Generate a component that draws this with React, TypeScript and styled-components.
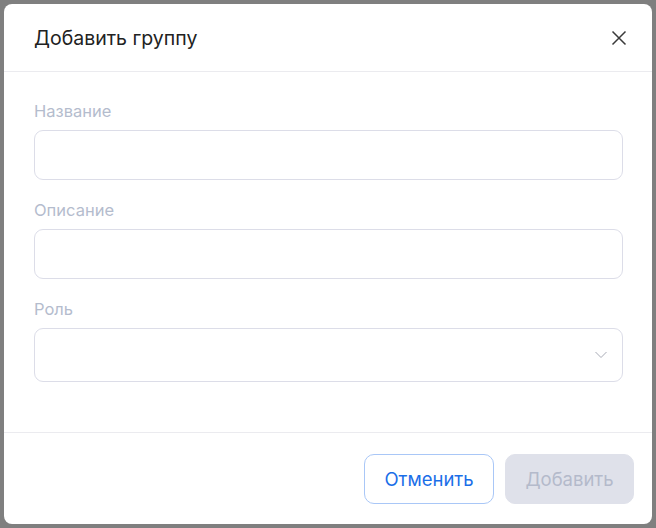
import React, { useState } from 'react';
import styled, { createGlobalStyle } from 'styled-components';

const GlobalStyle = createGlobalStyle`
  html, body {
    margin: 0;
    padding: 0;
    height: 100%;
  }
  body {
    background: #7f7f7f;
    font-family: Inter, "Noto Sans", "Liberation Sans", sans-serif;
  }
  #root {
    height: 100%;
  }
`;

const Overlay = styled.div`
  box-sizing: border-box;
  width: 656px;
  height: 528px;
  padding: 4px;
  display: flex;
  background: #7f7f7f;
`;

const Modal = styled.div`
  box-sizing: border-box;
  width: 648px;
  height: 520px;
  background: #fff;
  border-radius: 8px;
  display: flex;
  flex-direction: column;
  overflow: hidden;
`;

const Header = styled.div`
  height: 67px;
  padding: 0 21px 0 30px;
  display: flex;
  align-items: center;
  justify-content: space-between;
  border-bottom: 1px solid #ebebef;
`;

const Title = styled.h2`
  margin: 0;
  font-size: 19.5px;
  font-weight: 400;
  color: #222;
`;

const CloseButton = styled.button`
  width: 24px;
  height: 24px;
  padding: 0;
  border: none;
  background: none;
  display: flex;
  align-items: center;
  justify-content: center;
  cursor: pointer;
  color: #3a3a3a;
`;

const Body = styled.div`
  flex: 1;
  padding: 27px 29px 0 30px;
  display: flex;
  flex-direction: column;
  border-bottom: 1px solid #ebebef;
`;

const Field = styled.div`
  display: flex;
  flex-direction: column;
  gap: 7px;
  margin-bottom: 18px;
`;

const Label = styled.label`
  font-size: 16.5px;
  line-height: 24px;
  color: #b4bccd;
`;

const Input = styled.input`
  box-sizing: border-box;
  width: 100%;
  height: 50px;
  border: 1px solid #dcdde8;
  border-radius: 9px;
  padding: 0 16px;
  font-size: 16px;
  font-family: inherit;
  outline: none;
  background: #fff;
`;

const SelectBox = styled.div`
  box-sizing: border-box;
  width: 100%;
  height: 54px;
  border: 1px solid #dcdde8;
  border-radius: 9px;
  padding: 0 14px 1px 16px;
  display: flex;
  align-items: center;
  justify-content: flex-end;
  color: #a8abb6;
`;

const Footer = styled.div`
  height: 91px;
  box-sizing: border-box;
  padding: 21px 18px 0 0;
  display: flex;
  justify-content: flex-end;
  gap: 11px;
`;

const Button = styled.button<{ $primary?: boolean }>`
  box-sizing: border-box;
  width: ${(p) => (p.$primary ? '129px' : '130px')};
  height: 50px;
  border-radius: 10px;
  font-family: inherit;
  font-size: 18.5px;
  cursor: pointer;
  border: 1px solid ${(p) => (p.$primary ? '#dfe1ea' : '#a9c7f7')};
  background: ${(p) => (p.$primary ? '#dfe1ea' : '#fff')};
  color: ${(p) => (p.$primary ? '#b4bacb' : '#1a6ee8')};
  &:disabled {
    cursor: default;
  }
`;

const App: React.FC = () => {
  const [name, setName] = useState('');
  const [desc, setDesc] = useState('');

  return (
    <>
      <GlobalStyle />
      <Overlay>
        <Modal>
          <Header>
            <Title>Добавить группу</Title>
            <CloseButton aria-label="Закрыть">
              <svg width="16" height="16" viewBox="0 0 16 16" fill="none">
                <path d="M1.5 1.5L14.5 14.5M14.5 1.5L1.5 14.5" stroke="currentColor" strokeWidth="1.5" />
              </svg>
            </CloseButton>
          </Header>
          <Body>
            <Field>
              <Label>Название</Label>
              <Input value={name} onChange={(e) => setName(e.target.value)} />
            </Field>
            <Field>
              <Label>Описание</Label>
              <Input value={desc} onChange={(e) => setDesc(e.target.value)} />
            </Field>
            <Field>
              <Label>Роль</Label>
              <SelectBox>
                <svg width="14" height="10" viewBox="0 0 14 10" fill="none">
                  <path d="M1.5 2L7 7.5L12.5 2" stroke="currentColor" strokeWidth="1" />
                </svg>
              </SelectBox>
            </Field>
          </Body>
          <Footer>
            <Button>Отменить</Button>
            <Button $primary disabled>Добавить</Button>
          </Footer>
        </Modal>
      </Overlay>
    </>
  );
};

export default App;
